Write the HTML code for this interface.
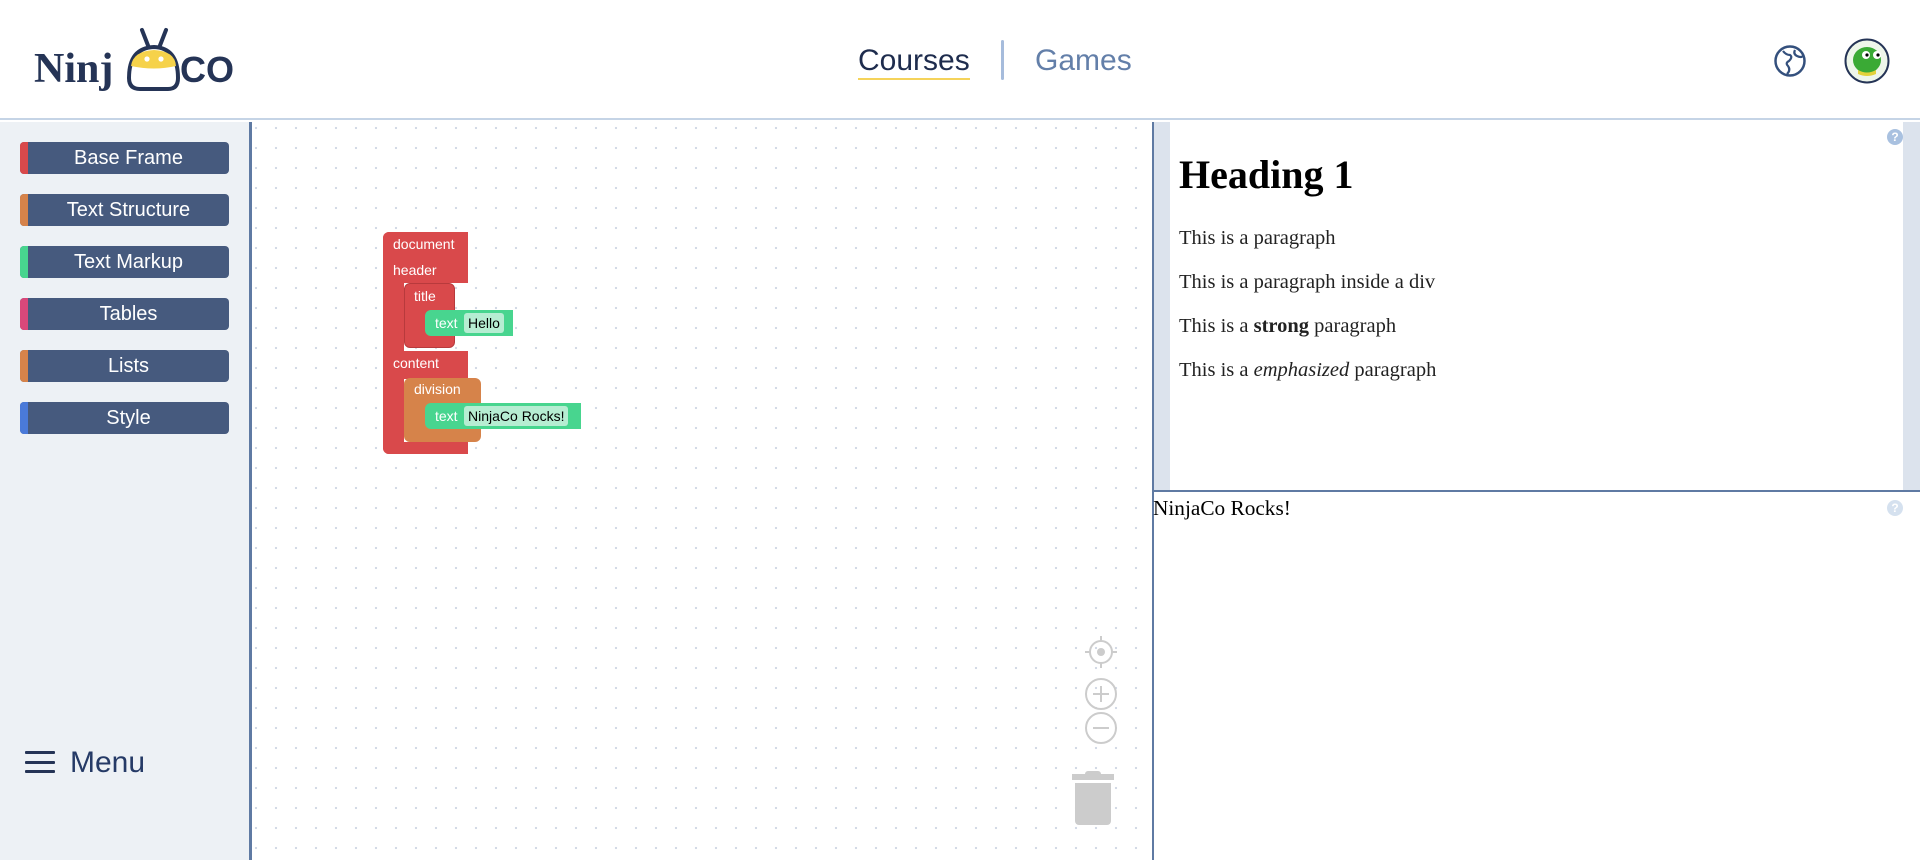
<!DOCTYPE html>
<html><head><meta charset="utf-8"><style>
*{margin:0;padding:0;box-sizing:border-box}
body{width:1920px;height:860px;overflow:hidden;background:#fff;font-family:"Liberation Sans",Arial,sans-serif;position:relative}
.abs{position:absolute}
#hdr{left:0;top:0;width:1920px;height:120px;background:#fff;border-bottom:2px solid #c5d4e6}
#side{left:0;top:122px;width:249px;height:738px;background:#edf1f5}
.btn{position:absolute;left:20px;width:209px;height:32px;background:#465a7e;border-radius:4px;color:#fff;font-size:20px;line-height:32px;text-align:center;padding-left:8px;overflow:hidden}
.btn i{position:absolute;left:0;top:0;width:8px;height:32px}
#ws{left:249px;top:122px;width:905px;height:738px;border-left:3px solid #5f7aa3;border-right:2px solid #5f7aa3;background-color:#fff;background-image:radial-gradient(circle,#d3dae6 1.1px,transparent 1.3px);background-size:20px 20px;background-position:-6px -4px}
.blk{position:absolute}
.lbl{position:absolute;color:#fff;font-size:14px;white-space:nowrap}
.fld{position:absolute;background:#b6edd2;border-radius:3px;color:#000;font-size:14px;line-height:20px;padding:0 4px}
.serif{font-family:"Liberation Serif","Times New Roman",serif}
</style></head><body>
<div id="hdr" class="abs">
  <svg class="abs" style="left:30px;top:20px" width="230" height="76" viewBox="0 0 230 76">
    <text x="4" y="62" font-family="Liberation Serif" font-weight="bold" font-size="42" fill="#253456">Ninj</text>
    <text x="150" y="62" font-family="Liberation Sans" font-weight="bold" font-size="36" fill="#253456">CO</text>
    <line x1="112" y1="10" x2="119" y2="28" stroke="#253456" stroke-width="4" stroke-linecap="round"/>
    <line x1="136" y1="10" x2="129" y2="28" stroke="#253456" stroke-width="4" stroke-linecap="round"/>
    <path d="M99 58 Q99 28 124 27 Q148 28 148 58 Q148 69 138 69 L110 69 Q99 69 99 58Z" fill="#fff" stroke="#253456" stroke-width="4"/>
    <path d="M101 46 Q103 31 124 30 Q145 31 146 46 Q124 51 101 46Z" fill="#f6d24a"/>
    <circle cx="117" cy="39" r="2.6" fill="#fff"/><circle cx="131" cy="39" r="2.6" fill="#fff"/>
  </svg>
  <div class="abs" style="left:858px;top:44px;font-size:30px;color:#1e2c4d;">Courses</div>
  <div class="abs" style="left:858px;top:78px;width:112px;height:2px;background:#f5d35a"></div>
  <div class="abs" style="left:1001px;top:40px;width:3px;height:40px;background:#a6bcdc;border-radius:2px"></div>
  <div class="abs" style="left:1035px;top:44px;font-size:30px;color:#637fa9;">Games</div>
  <svg class="abs" style="left:1773px;top:44px" width="34" height="34" viewBox="0 0 34 34"><circle cx="17" cy="17" r="14.5" fill="none" stroke="#34507d" stroke-width="2.5"/><path d="M10 7 Q13 11 17 11 Q20 13 16 17 Q12 19 15 22 Q18 26 14 30 M22 6 Q20 10 24 12 Q28 14 30 12" fill="none" stroke="#34507d" stroke-width="2.2"/></svg>
  <svg class="abs" style="left:1844px;top:38px" width="46" height="46" viewBox="0 0 46 46"><circle cx="23" cy="23" r="21.5" fill="#eef6ea" stroke="#253456" stroke-width="2"/><ellipse cx="23" cy="22" rx="14" ry="13" fill="#3aaa35"/><circle cx="22" cy="17" r="4" fill="#fff"/><circle cx="33" cy="17" r="4" fill="#fff"/><circle cx="23" cy="17" r="1.6" fill="#000"/><circle cx="34" cy="17" r="1.6" fill="#000"/><path d="M14 32 Q23 37 32 32 L32 36 Q23 40 14 36Z" fill="#e3d23a"/></svg>
</div>
<div id="side" class="abs">
  <div class="btn" style="top:20px"><i style="background:#d9494b"></i>Base Frame</div>
  <div class="btn" style="top:72px"><i style="background:#d6834a"></i>Text Structure</div>
  <div class="btn" style="top:124px"><i style="background:#48d58f"></i>Text Markup</div>
  <div class="btn" style="top:176px"><i style="background:#d9487a"></i>Tables</div>
  <div class="btn" style="top:228px"><i style="background:#d6834a"></i>Lists</div>
  <div class="btn" style="top:280px"><i style="background:#4a7ad9"></i>Style</div>
  <div class="abs" style="left:25px;top:629px;width:30px;height:3px;background:#253456;border-radius:1px"></div>
  <div class="abs" style="left:25px;top:639px;width:30px;height:3px;background:#253456;border-radius:1px"></div>
  <div class="abs" style="left:25px;top:648px;width:30px;height:3px;background:#253456;border-radius:1px"></div>
  <div class="abs" style="left:70px;top:624px;font-size:30px;color:#253a66">Menu</div>
</div>
<div id="ws" class="abs"></div>
<div class="blk" style="left:383px;top:232px;width:85px;height:51px;background:#d9494b;border-radius:6px 0 0 0"></div>
<div class="blk" style="left:383px;top:232px;width:21px;height:222px;background:#d9494b;border-radius:6px 0 0 6px"></div>
<div class="blk" style="left:404px;top:283px;width:51px;height:65px;background:#d9494b;border:1px solid #b83a3c;border-radius:6px"></div>
<div class="blk" style="left:383px;top:351px;width:85px;height:28px;background:#d9494b"></div>
<div class="blk" style="left:404px;top:378px;width:77px;height:64px;background:#d6834a;border-radius:6px"></div>
<div class="blk" style="left:383px;top:442px;width:85px;height:12px;background:#d9494b;border-radius:0 0 0 6px"></div>
<div class="blk" style="left:425px;top:310px;width:88px;height:26px;background:#48d58f;border-radius:6px 0 0 6px"></div>
<div class="blk" style="left:425px;top:403px;width:156px;height:26px;background:#48d58f;border-radius:6px 0 0 6px"></div>
<div class="lbl" style="left:393px;top:236px">document</div>
<div class="lbl" style="left:393px;top:262px">header</div>
<div class="lbl" style="left:414px;top:288px">title</div>
<div class="lbl" style="left:435px;top:315px">text</div>
<div class="fld" style="left:464px;top:313px">Hello</div>
<div class="lbl" style="left:393px;top:355px">content</div>
<div class="lbl" style="left:414px;top:381px">division</div>
<div class="lbl" style="left:435px;top:408px">text</div>
<div class="fld" style="left:464px;top:406px">NinjaCo Rocks!</div>
<svg class="abs" style="left:1080px;top:630px" width="40" height="200" viewBox="0 0 40 200">
 <g stroke="#ccc" stroke-width="2" fill="none">
  <circle cx="21" cy="22" r="11"/><line x1="21" y1="6" x2="21" y2="11"/><line x1="21" y1="33" x2="21" y2="38"/><line x1="5" y1="22" x2="10" y2="22"/><line x1="32" y1="22" x2="37" y2="22"/>
  <circle cx="21" cy="64" r="15"/><line x1="13" y1="64" x2="29" y2="64"/><line x1="21" y1="56" x2="21" y2="72"/>
  <circle cx="21" cy="98" r="15"/><line x1="13" y1="98" x2="29" y2="98"/>
 </g>
 <circle cx="21" cy="22" r="4" fill="#ccc"/>
</svg>
<div class="abs" style="left:1072px;top:774px;width:42px;height:6px;background:#ccc"></div>
<div class="abs" style="left:1085px;top:771px;width:16px;height:4px;background:#ccc;border-radius:3px 3px 0 0"></div>
<div class="abs" style="left:1075px;top:783px;width:36px;height:42px;background:#ccc;border-radius:0 0 4px 4px"></div>
<div class="abs" style="left:1154px;top:122px;width:16px;height:368px;background:#dce3ed"></div>
<div class="abs" style="left:1903px;top:122px;width:17px;height:368px;background:#dce3ed"></div>
<div class="abs" style="left:1152px;top:490px;width:768px;height:2px;background:#5f7aa3"></div>
<div class="abs" style="left:1887px;top:129px;width:16px;height:16px;border-radius:50%;background:#a9c1e0;color:#fff;font-size:12px;font-weight:bold;text-align:center;line-height:16px">?</div>
<div class="abs" style="left:1887px;top:500px;width:16px;height:16px;border-radius:50%;background:#d5e1ef;color:#fff;font-size:12px;font-weight:bold;text-align:center;line-height:16px">?</div>
<div class="abs serif" style="left:1179px;top:152px;font-size:40px;font-weight:bold;color:#000;line-height:46px">Heading 1</div>
<div class="abs serif" style="left:1179px;top:227px;font-size:20.5px;color:#222">This is a paragraph</div>
<div class="abs serif" style="left:1179px;top:271px;font-size:20.5px;color:#222">This is a paragraph inside a div</div>
<div class="abs serif" style="left:1179px;top:315px;font-size:20.5px;color:#222">This is a <b>strong</b> paragraph</div>
<div class="abs serif" style="left:1179px;top:359px;font-size:20.5px;color:#222">This is a <i>emphasized</i> paragraph</div>
<div class="abs serif" style="left:1153px;top:496px;font-size:21.3px;color:#000">NinjaCo Rocks!</div>
</body></html>
